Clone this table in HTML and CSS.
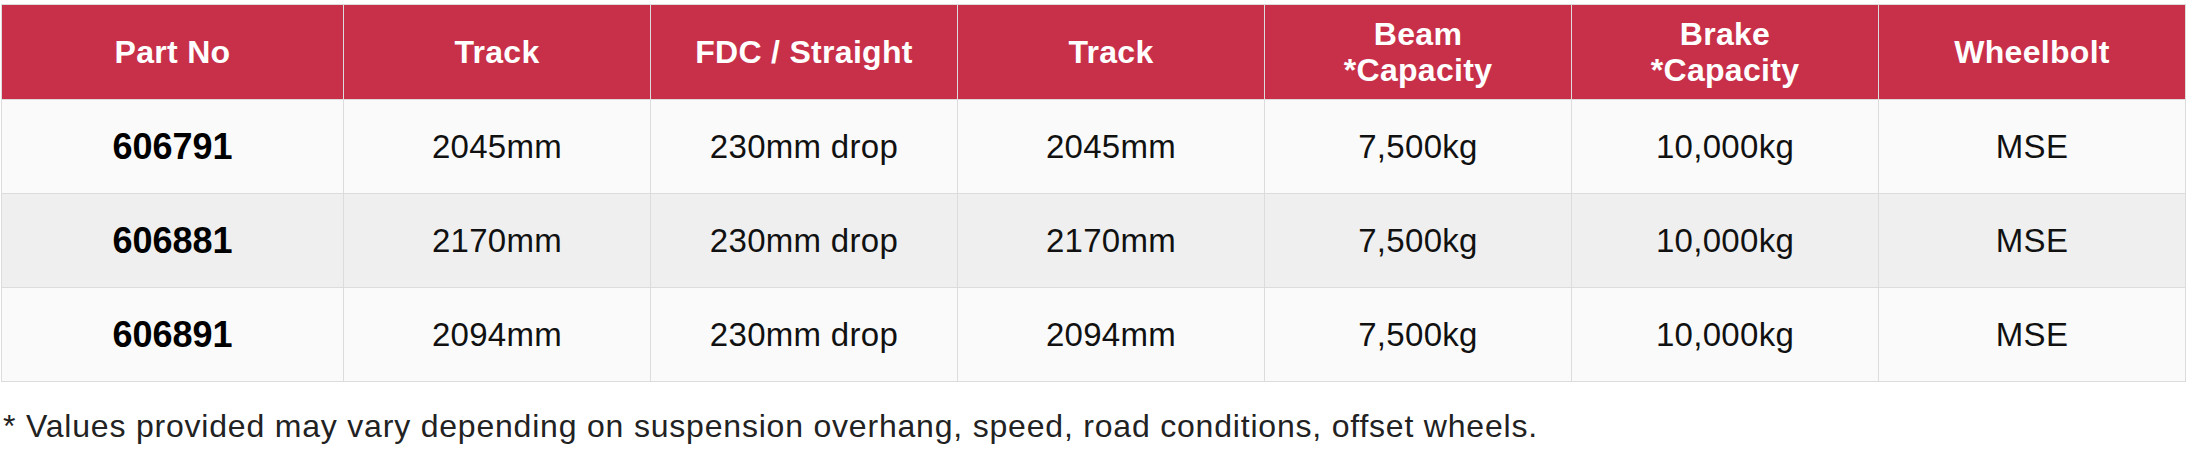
FILE: index.html
```html
<!DOCTYPE html>
<html lang="en">
<head>
<meta charset="utf-8">
<title>Axle specifications</title>
<link rel="stylesheet" href="styles.css">
</head>
<body>
<div class="wrap">
  <table class="spec">
    <colgroup>
      <col class="c-first">
      <col class="c-col"><col class="c-col"><col class="c-col"><col class="c-col"><col class="c-col"><col class="c-col">
    </colgroup>
    <thead>
      <tr>
        <th>Part No</th>
        <th>Track</th>
        <th>FDC / Straight</th>
        <th>Track</th>
        <th>Beam<br>*Capacity</th>
        <th>Brake<br>*Capacity</th>
        <th>Wheelbolt</th>
      </tr>
    </thead>
    <tbody>
      <tr class="odd">
        <td class="part">606791</td>
        <td>2045mm</td>
        <td>230mm drop</td>
        <td>2045mm</td>
        <td>7,500kg</td>
        <td>10,000kg</td>
        <td>MSE</td>
      </tr>
      <tr class="even">
        <td class="part">606881</td>
        <td>2170mm</td>
        <td>230mm drop</td>
        <td>2170mm</td>
        <td>7,500kg</td>
        <td>10,000kg</td>
        <td>MSE</td>
      </tr>
      <tr class="odd">
        <td class="part">606891</td>
        <td>2094mm</td>
        <td>230mm drop</td>
        <td>2094mm</td>
        <td>7,500kg</td>
        <td>10,000kg</td>
        <td>MSE</td>
      </tr>
    </tbody>
  </table>
  <p class="note">* Values provided may vary depending on suspension overhang, speed, road conditions, offset wheels.</p>
</div>
</body>
</html>
```
FILE: styles.css
```css
html, body {
  margin: 0;
  padding: 0;
  background: #ffffff;
}
.wrap {
  padding: 4px 1px 0 1px;
  font-family: "Liberation Sans", Arial, Helvetica, sans-serif;
}
.spec {
  width: 2184px;
  border-collapse: collapse;
  table-layout: fixed;
}
.c-first { width: 342px; }
.c-col { width: 307px; }
.spec th,
.spec td {
  border: 1px solid #dcdcdc;
  text-align: center;
  vertical-align: middle;
  padding: 0;
}
.spec th {
  background: #c8304a;
  color: #ffffff;
  font-weight: 700;
  font-size: 32px;
  letter-spacing: 0.3px;
  line-height: 36px;
  height: 94px;
}
.spec td {
  color: #111111;
  font-size: 33px;
  letter-spacing: 0.3px;
  line-height: 36px;
  height: 93px;
}
.spec td.part {
  font-weight: 700;
  font-size: 36px;
  letter-spacing: 0;
  color: #000000;
}
.spec tr.odd td { background: #fafafa; }
.spec tr.even td { background: #efefef; }
.note {
  margin: 26px 0 0 2px;
  font-size: 32px;
  letter-spacing: 0.8px;
  line-height: 36px;
  color: #222222;
}
```
